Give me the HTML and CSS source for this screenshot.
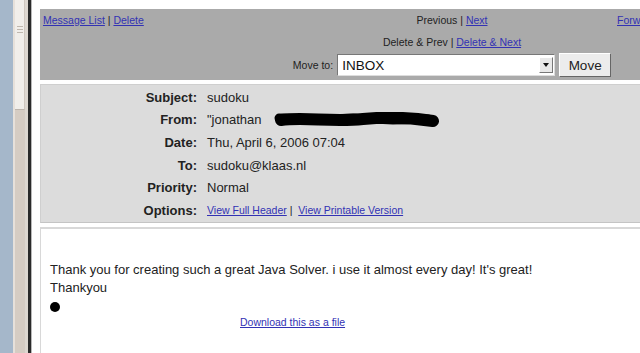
FILE: index.html
```html
<!DOCTYPE html>
<html>
<head>
<meta charset="utf-8">
<link rel="stylesheet" href="styles.css">
</head>
<body>
<div class="screen">
  <div class="desk"></div>
  <div class="scroll">
    <div class="thumb"><div class="grip"></div><div class="grip"></div><div class="grip"></div></div>
  </div>
  <div class="frame"></div>
  <div class="page">
    <div class="toolbar">
      <div class="tb-left"><a href="#">Message List</a> | <a href="#">Delete</a></div>
      <div class="tb-center">
        <div class="tb-row">Previous | <a href="#">Next</a></div>
        <div class="tb-row">Delete &amp; Prev | <a href="#">Delete &amp; Next</a></div>
        <div class="tb-move">
          <span class="move-label">Move to:</span>
          <div class="select"><span class="sel-text">INBOX</span><span class="sel-btn"><span class="arrow"></span></span></div>
          <div class="btn">Move</div>
        </div>
      </div>
      <div class="tb-right"><a href="#">Forward</a></div>
    </div>
    <div class="headers">
      <div class="lbl">Subject:</div><div class="val">sudoku</div>
      <div class="lbl">From:</div><div class="val">"jonathan <svg class="redact" width="170" height="16" viewBox="0 0 170 16"><path d="M8 8 C 30 5, 60 10, 90 7 S 140 6, 160 9" stroke="#000" stroke-width="12" stroke-linecap="round" fill="none"/><path d="M6 6 L 40 8 L 80 6 L 120 8 L 155 7" stroke="#000" stroke-width="9" stroke-linecap="round" fill="none"/></svg></div>
      <div class="lbl">Date:</div><div class="val">Thu, April 6, 2006 07:04</div>
      <div class="lbl">To:</div><div class="val">sudoku@klaas.nl</div>
      <div class="lbl">Priority:</div><div class="val">Normal</div>
      <div class="lbl">Options:</div><div class="val small"><a href="#">View Full Header</a> | &nbsp;<a href="#">View Printable Version</a></div>
    </div>
    <div class="body">
      <p class="line">Thank you for creating such a great Java Solver. i use it almost every day! It's great!</p>
      <p class="line">Thankyou</p>
      <p class="line"><span class="blob"></span></p>
      <div class="attach"><a href="#">Download this as a file</a></div>
    </div>
  </div>
</div>
</body>
</html>
```
FILE: styles.css
```css
html, body {
  margin: 0;
  padding: 0;
  overflow: hidden;
  background: #fff;
}
.screen {
  display: flex;
  width: 640px;
  height: 353px;
  overflow: hidden;
  font-family: "Liberation Sans", Arial, sans-serif;
  color: #222;
}
.desk {
  flex: 0 0 13px;
  background: #a5b7ca;
}
.scroll {
  flex: 0 0 10px;
  background: #d5ccc3;
  border-left: 2px solid #e6e0da;
}
.thumb {
  height: 110px;
  background: #f1eeea;
  border-right: 1px solid #cfc7bf;
  border-bottom: 1px solid #bdb5ad;
  display: flex;
  flex-direction: column;
  align-items: center;
  gap: 2px;
  padding-top: 26px;
  box-sizing: border-box;
}
.grip {
  width: 6px;
  height: 1px;
  background: #bfb7ae;
}
.frame {
  flex: 0 0 3px;
  background: #ddd7d0;
  border-right: 3px solid #2a2a2a;
}
.page {
  flex: 0 0 auto;
  width: 700px;
  padding: 9px 0 0 8px;
  box-sizing: border-box;
  border-left: 1px solid #b8b8b8;
}
a {
  color: #3232b4;
  text-decoration: underline;
}
.toolbar {
  display: grid;
  grid-template-columns: 250px 318px auto;
  column-gap: 0;
  background: #aaaaaa;
  height: 71px;
  padding-left: 3px;
  font-size: 10.5px;
  color: #222;
}
.tb-left, .tb-right {
  padding-top: 5px;
  line-height: 13px;
  white-space: nowrap;
}
.tb-right {
  padding-left: 6px;
}
.tb-center {
  display: flex;
  flex-direction: column;
  align-items: center;
  padding-top: 5px;
}
.tb-row {
  line-height: 13px;
  height: 22px;
  white-space: nowrap;
}
.tb-move {
  display: flex;
  align-items: center;
  gap: 4px;
  margin-top: -5px;
  white-space: nowrap;
}
.move-label {
  font-size: 10.5px;
}
.select {
  width: 216px;
  height: 20px;
  background: #fff;
  border: 1px solid #777;
  border-right-color: #ddd;
  border-bottom-color: #ddd;
  display: flex;
  align-items: center;
  justify-content: space-between;
  font-size: 13.5px;
  color: #111;
}
.sel-text {
  padding-left: 4px;
}
.sel-btn {
  width: 14px;
  height: 16px;
  margin-right: 1px;
  background: #e8e8e8;
  border: 1px solid #fff;
  border-right-color: #777;
  border-bottom-color: #777;
  box-sizing: border-box;
  display: flex;
  align-items: center;
  justify-content: center;
}
.arrow {
  width: 0;
  height: 0;
  border-left: 3px solid transparent;
  border-right: 3px solid transparent;
  border-top: 4px solid #111;
}
.btn {
  width: 50px;
  height: 22px;
  margin-left: 0;
  background: #ececec;
  border: 1px solid #fff;
  border-right-color: #666;
  border-bottom-color: #666;
  display: flex;
  align-items: center;
  justify-content: center;
  font-size: 13.5px;
  color: #222;
}
.headers {
  margin-top: 4px;
  background: #dcdcdc;
  border: 1px solid #cfcfcf;
  border-bottom-color: #c4c4c4;
  display: grid;
  grid-template-columns: 156px auto;
  column-gap: 10px;
  grid-auto-rows: 22.6px;
  padding-top: 1px;
  height: 139px;
  box-sizing: border-box;
  font-size: 13px;
  align-items: center;
}
.lbl {
  font-weight: bold;
  text-align: right;
  color: #222;
}
.val {
  display: flex;
  align-items: center;
  color: #222;
  white-space: pre;
}
.val.small {
  font-size: 10.5px;
}
.redact {
  margin-left: 8px;
}
.body {
  margin-top: 4px;
  border-top: 2px solid #d8d8d8;
  border-left: 1px solid #d8d8d8;
  padding: 32px 0 0 9px;
  height: 200px;
  font-size: 13px;
  color: #222;
}
.line {
  margin: 0;
  line-height: 18px;
}
.blob {
  display: inline-block;
  width: 10px;
  height: 10px;
  border-radius: 50%;
  background: #000;
  vertical-align: middle;
}
.attach {
  margin-top: 1px;
  padding-left: 190px;
  font-size: 10.5px;
}
```
